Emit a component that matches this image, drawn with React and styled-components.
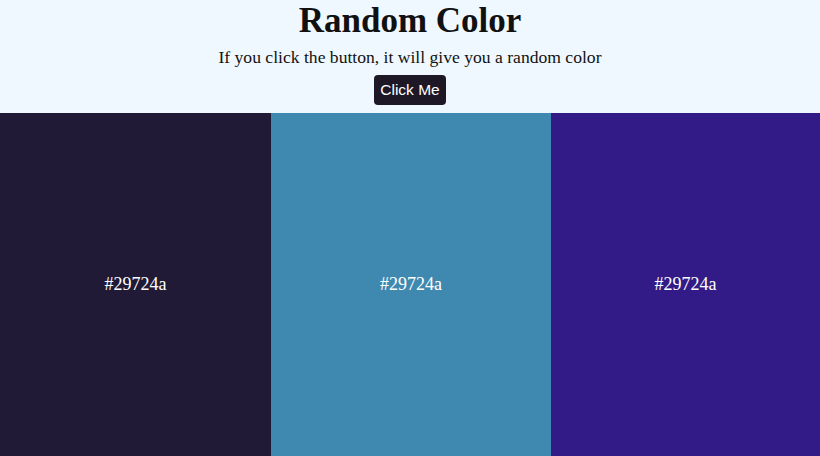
import React from "react";
import styled, { createGlobalStyle } from "styled-components";

const GlobalStyle = createGlobalStyle`
  html, body {
    margin: 0;
    padding: 0;
  }
  body {
    font-family: "Liberation Serif", "Times New Roman", serif;
    background: #f0f8ff;
  }
`;

const colors = ["#211a37", "#3f89b1", "#331b87"];

const App = () => {
  return (
    <Page>
      <GlobalStyle />
      <Header>
        <Title>Random Color</Title>
        <Subtitle>If you click the button, it will give you a random color</Subtitle>
        <Button>Click Me</Button>
      </Header>
      <Swatches>
        {colors.map((c, i) => (
          <Swatch key={i} $bg={c}>
            #29724a
          </Swatch>
        ))}
      </Swatches>
    </Page>
  );
};

const Page = styled.div`
  display: flex;
  flex-direction: column;
  height: 100vh;
`;

const Header = styled.header`
  display: flex;
  flex-direction: column;
  align-items: center;
  background: #f0f8ff;
  padding-bottom: 8px;
`;

const Title = styled.h1`
  margin: 0;
  font-size: 35px;
  line-height: 42px;
  font-weight: bold;
  color: #111;
`;

const Subtitle = styled.p`
  margin: 0;
  font-size: 17.6px;
  line-height: 31px;
  color: #111;
`;

const Button = styled.button`
  margin-top: 2px;
  width: 72px;
  height: 30px;
  padding: 0;
  background: #1e1726;
  color: #fff;
  border: none;
  border-radius: 4px;
  font-family: "Liberation Sans", Arial, sans-serif;
  font-size: 15.5px;
  cursor: pointer;
`;

const Swatches = styled.div`
  flex: 1;
  display: grid;
  grid-template-columns: 271px 280px 1fr;
`;

const Swatch = styled.div`
  background: ${(p) => p.$bg};
  display: flex;
  align-items: center;
  justify-content: center;
  color: #fff;
  font-size: 18px;
`;

export default App;
